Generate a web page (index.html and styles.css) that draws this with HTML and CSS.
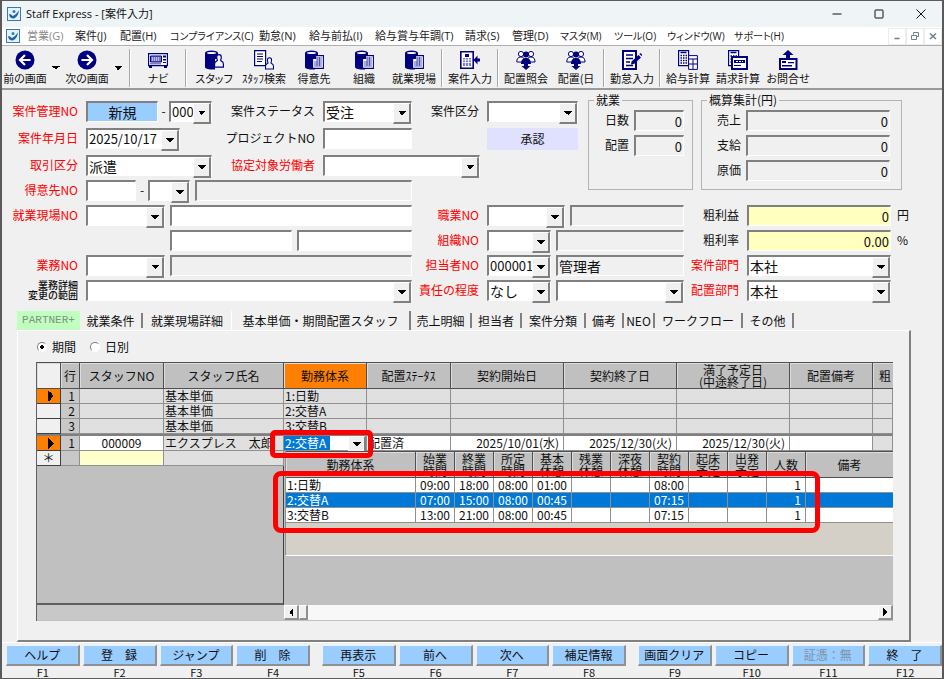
FILE: index.html
```html
<!DOCTYPE html>
<html lang="ja">
<head>
<meta charset="utf-8">
<title>Staff Express - [案件入力]</title>
<link rel="stylesheet" href="styles.css">
</head>
<body>
<svg class="defs" aria-hidden="true">
  <symbol id="logo" viewBox="0 0 14 14"><rect x=".5" y=".5" width="13" height="13" fill="#e4f3fa" stroke="#3c78b4"/><path d="M2 7.500c1.500-.5 2.500 0 3.500 1.500C8 8.500 10 6 12 3.500 11.500 7.500 9.500 11 6.500 11.500 4 11.500 2.500 10 2 7.500z" fill="#1f62ad"/><circle cx="7" cy="4.500" r="1.500" fill="#2b7fc0"/></symbol>
  <symbol id="cyl" viewBox="0 0 20 20"><path d="M1 3v14c0 1.500 3 2.500 6.500 2.500H11V9h3V3z"/><ellipse cx="7.500" cy="3" rx="6.500" ry="2.500"/><ellipse cx="7.500" cy="3" rx="4.500" ry="1.100" fill="#fff"/></symbol>
  <symbol id="man" viewBox="0 0 10 14"><path d="M5 .7c1.500 0 2.300 1 2.300 2.500S6.600 6 6.600 6.500l2.300 1.700c.6 1 .6 3 .6 5H.5c0-2 0-4 .6-5l2.300-1.700C3.400 6 2.700 4.700 2.700 3.200S3.500.7 5 .7z" fill="#f4f4ff" stroke="#000080" stroke-width="1.200"/></symbol>
  <symbol id="bldg" viewBox="0 0 12 14"><path d="M.6 13.400V3.500h3V.6h7.800v12.800z" fill="#fff" stroke="#000080" stroke-width="1.100"/><path d="M5 3h5M5 5h5M2 7h8M2 9h8M2 11h8M5 2v9M7.500 2v9" stroke="#4848a8" stroke-width=".9" fill="none"/></symbol>
  <symbol id="dbman" viewBox="0 0 20 20"><use href="#cyl" width="20" height="20"/><use href="#man" x="10" y="4" width="10" height="14"/></symbol>
  <symbol id="dbbldg" viewBox="0 0 20 20"><use href="#cyl" width="20" height="20"/><use href="#bldg" x="8" y="5" width="12" height="14"/></symbol>
  <symbol id="people" viewBox="0 0 20 20"><circle cx="5" cy="4" r="2.600" fill="#fff" stroke="#000080"/><circle cx="15" cy="4" r="2.600" fill="#fff" stroke="#000080"/><path d="M.8 12c0-3 1-5 4-5s4 2 4 5zM11 12c0-3 1-5 4-5s4 2 4 5z" fill="#fff" stroke="#000080"/><circle cx="10" cy="4.500" r="3"/><path d="M5 14c0-4 2-6 5-6s5 2 5 6zM8 14h4v2h2.500L10 20l-4.500-4H8z"/></symbol>
  <symbol id="back" viewBox="0 0 20 20"><circle cx="10" cy="10" r="9.500"/><path d="M15.500 10H5.500M10 5l-5 5 5 5" stroke="#fff" stroke-width="2.200" fill="none"/></symbol>
  <symbol id="next" viewBox="0 0 20 20"><circle cx="10" cy="10" r="9.500"/><path d="M4.500 10h10M10 5l5 5-5 5" stroke="#fff" stroke-width="2.200" fill="none"/></symbol>
  <symbol id="navi" viewBox="0 0 20 20"><path d="M.6 3.600h18.800v12H.600z" fill="#fff" stroke="#000080" stroke-width="1.200"/><path d="M2.500 6h11v6h-11z" fill="#7474c0" stroke="#000080"/><path d="M4 8h8M4 10h8" stroke="#fff" stroke-dasharray="1 1"/><path d="M15 5.500h3v2h-3zM15 9h3v1.500h-3zM15 12h3v1h-3zM2 13.500h11v.8H2zM1 16h3v2H1zM16 16h3v2h-3z"/></symbol>
  <symbol id="search" viewBox="0 0 20 20"><path d="M.6.600h11v15H.600z" fill="#fff" stroke="#000080" stroke-width="1.200"/><path d="M3 4h6M3 6.500h6M3 9h6M3 11.500h5" stroke="#000080"/><use href="#man" x="11" y="7" width="9" height="13"/></symbol>
  <symbol id="entry" viewBox="0 0 20 20"><path d="M.8 1.800h12.400v16.400H.800z" fill="#fff" stroke="#000080" stroke-width="1.600"/><path d="M3 8h8v8H3z" fill="#8080c4"/><path d="M3 10h8M3 12.500h8M5.500 8v8M8.500 8v8" stroke="#fff" stroke-width=".8"/><path d="M5 4h4v3H5zM13.500 10l4-4.500V8.500H20v3h-2.500v3z"/></symbol>
  <symbol id="write" viewBox="0 0 20 20"><path d="M1 1h13v18H1z" fill="#fff" stroke="#000080" stroke-width="2"/><path d="M4 5h7M4 8.500h7M4 12h4M4 15.500h7" stroke="#000080" stroke-width="1.400"/><path d="M9.500 11.500l7-6.500 2.500 2.500-7 6.500-3 .500zM17.500 4l1-1 2 2-1 1z"/></symbol>
  <symbol id="pay" viewBox="0 0 20 20"><path d="M.6.600h10v15H.600z" fill="#fff" stroke="#000080" stroke-width="1.200"/><path d="M2.500 2.500h6M2.500 5.500h1.500m1 0h1.500m1 0H9M2.500 8h1.500m1 0h1.500m1 0H9M2.500 10.500h1.500m1 0h1.500m1 0H9M2.500 13h1.500m1 0h1.500m1 0H9" stroke="#000080" stroke-width="1.500"/><path d="M10.600 5.600h8.800v13.800h-8.800zM10.600 9h8.800M15 9v10M10.600 14h8.800" fill="#fff" stroke="#000080"/></symbol>
  <symbol id="bill" viewBox="0 0 20 20"><path d="M.6.600h10v15H.600z" fill="#fff" stroke="#000080" stroke-width="1.200"/><path d="M2.500 2.500h6M2.500 6h1.500m1 0h1.500m1 0H9M2.500 9h1.500m1 0h1.500M2.500 12h1.500" stroke="#000080" stroke-width="1.500"/><path d="M4 7h15v12H4z" fill="#fff" stroke="#000080" stroke-width="2"/><path d="M6 10h11v3H6z"/><path d="M8 11.500h7" stroke="#fff" stroke-dasharray="2 1"/><path d="M6 15.500h7" stroke="#000080"/></symbol>
  <symbol id="mail" viewBox="0 0 20 20"><path d="M2 9h16.500v10H2z" fill="#fff" stroke="#000080" stroke-width="2"/><path d="M4 11h4v2H4zM4 15h10v1.500H4zM10 12h6v1.200h-6zM10 0l5.500 5H12v3H8V5H4.500z"/></symbol>
</svg>

<div class="window">
  <header class="titlebar">
    <svg class="logo"><use href="#logo"/></svg>
    <h1>Staff Express - [案件入力]</h1>
    <button class="sys" aria-label="最小化"><svg viewBox="0 0 10 10"><path d="M.5 5h9"/></svg></button>
    <button class="sys" aria-label="最大化"><svg viewBox="0 0 10 10"><rect x="1" y="1" width="8" height="8" rx=".5"/></svg></button>
    <button class="sys" aria-label="閉じる"><svg viewBox="0 0 10 10"><path d="M.5.500l9 9M9.500.500l-9 9"/></svg></button>
  </header>

  <nav class="menubar">
    <svg class="logo"><use href="#logo"/></svg>
    <div class="menus">
      <a href="#" class="off">営業(G)</a><a href="#">案件(J)</a><a href="#">配置(H)</a><a href="#" class="kana">コンプライアンス(C)</a><a href="#">勤怠(N)</a><a href="#">給与前払(I)</a><a href="#">給与賞与年調(T)</a><a href="#">請求(S)</a><a href="#">管理(D)</a><a href="#" class="kana">マスタ(M)</a><a href="#" class="kana">ツール(O)</a><a href="#" class="kana">ウィンドウ(W)</a><a href="#" class="kana">サポート(H)</a>
    </div>
    <button class="mdi" aria-label="子画面を最小化"><svg viewBox="0 0 8 8"><path d="M1.500 6.500h5"/></svg></button>
    <button class="mdi" aria-label="子画面を元に戻す"><svg viewBox="0 0 8 8"><path d="M2.500 2.500v-2h5v4h-2M.500 3.500h5v4h-5z" stroke-width="1"/></svg></button>
    <button class="mdi" aria-label="子画面を閉じる"><svg viewBox="0 0 8 8"><path d="M1 1.500l6 5.500M7 1.500L1 7"/></svg></button>
  </nav>

  <div class="toolbar">
    <button class="tool nav"><svg><use href="#back"/></svg>前の画面</button><button class="more" aria-label="前の画面の履歴"></button>
    <button class="tool nav"><svg><use href="#next"/></svg>次の画面</button><button class="more" aria-label="次の画面の履歴"></button>
    <i class="sep"></i>
    <button class="tool"><svg><use href="#navi"/></svg>ナビ</button>
    <i class="sep"></i>
    <button class="tool"><svg><use href="#dbman"/></svg>スタッフ</button>
    <button class="tool"><svg><use href="#search"/></svg>ｽﾀｯﾌ検索</button>
    <button class="tool"><svg><use href="#dbbldg"/></svg>得意先</button>
    <button class="tool"><svg><use href="#dbbldg"/></svg>組織</button>
    <button class="tool"><svg><use href="#dbbldg"/></svg>就業現場</button>
    <i class="sep"></i>
    <button class="tool"><svg><use href="#entry"/></svg>案件入力</button>
    <i class="sep"></i>
    <button class="tool"><svg><use href="#people"/></svg>配置照会</button>
    <button class="tool"><svg><use href="#people"/></svg>配置(日</button>
    <i class="sep"></i>
    <button class="tool"><svg><use href="#write"/></svg>勤怠入力</button>
    <i class="sep"></i>
    <button class="tool"><svg><use href="#pay"/></svg>給与計算</button>
    <button class="tool"><svg><use href="#bill"/></svg>請求計算</button>
    <button class="tool"><svg><use href="#mail"/></svg>お問合せ</button>
  </div>

  <main>
    <div class="top">
      <div class="fields">
        <div class="row r1">
          <label class="req" for="no">案件管理NO</label>
          <div class="pair"><input id="no" class="new" value="新規"><span>-</span><span class="combo"><select class="num" aria-label="枝番"><option>000</option></select></span></div>
          <label for="status">案件ステータス</label><span class="combo"><select id="status"><option>受注</option></select></span>
          <label for="kubun">案件区分</label><span class="combo"><select id="kubun"><option></option></select></span>
        </div>
        <div class="row r1">
          <label class="req" for="date">案件年月日</label>
          <span class="combo date"><select id="date" class="num"><option>2025/10/17</option></select></span>
          <label for="proj">プロジェクトNO</label><input id="proj">
          <button class="approve">承認</button>
        </div>
        <div class="row r3">
          <label class="req" for="deal">取引区分</label><span class="combo"><select id="deal"><option>派遣</option></select></span>
          <label class="req" for="kyotei">協定対象労働者</label><span class="combo"><select id="kyotei"><option></option></select></span>
        </div>
        <div class="row r4">
          <label class="req" for="client">得意先NO</label>
          <div class="pair client"><input id="client"><span>-</span><span class="combo"><select aria-label="得意先枝番"><option></option></select></span></div>
          <input class="ro" readonly aria-label="得意先名">
        </div>
      </div>
      <fieldset class="work"><legend>就業</legend>
        <label for="days">日数</label><input id="days" class="ro num r" readonly value="0">
        <label for="place">配置</label><input id="place" class="ro num r" readonly value="0">
      </fieldset>
      <fieldset class="sum"><legend>概算集計(円)</legend>
        <label for="uri">売上</label><input id="uri" class="ro num r" readonly value="0">
        <label for="shi">支給</label><input id="shi" class="ro num r" readonly value="0">
        <label for="gen">原価</label><input id="gen" class="ro num r" readonly value="0">
      </fieldset>
    </div>

    <div class="bottom">
      <div class="row r5">
        <label class="req" for="site">就業現場NO</label><span class="combo"><select id="site"><option></option></select></span><input aria-label="就業現場名">
        <label class="req" for="job">職業NO</label><span class="combo"><select id="job"><option></option></select></span><input class="ro" readonly aria-label="職業名">
        <label for="profit">粗利益</label><input id="profit" class="sumval num r" value="0"><span class="unit">円</span>
      </div>
      <div class="row r6">
        <input class="second" aria-label="就業現場部署"><input aria-label="就業現場担当">
        <label class="req" for="org">組織NO</label><span class="combo"><select id="org"><option></option></select></span><input class="ro" readonly aria-label="組織名">
        <label for="rate">粗利率</label><input id="rate" class="sumval num r" value="0.00"><span class="unit">%</span>
      </div>
      <div class="row r7">
        <label class="req" for="gyo">業務NO</label><span class="combo"><select id="gyo"><option></option></select></span><input class="ro" readonly aria-label="業務名">
        <label class="req" for="tan">担当者NO</label><span class="combo"><select id="tan" class="num"><option>000001</option></select></span><input class="ro" readonly aria-label="担当者名" value="管理者">
        <label class="req" for="dept1">案件部門</label><span class="combo"><select id="dept1"><option>本社</option></select></span>
      </div>
      <div class="row r8">
        <label class="tiny" for="range">業務詳細<br>変更の範囲</label><span class="combo"><select id="range"><option></option></select></span>
        <label class="req" for="resp">責任の程度</label><span class="combo"><select id="resp"><option>なし</option></select></span><span class="combo"><select aria-label="責任の内容"><option></option></select></span>
        <label class="req" for="dept2">配置部門</label><span class="combo"><select id="dept2"><option>本社</option></select></span>
      </div>
    </div>

    <div class="tabs" role="tablist">
      <button role="tab" class="partner">PARTNER+</button><button role="tab">就業条件</button><button role="tab" class="plain">就業現場詳細</button><button role="tab" class="active" aria-selected="true">基本単価・期間配置スタッフ</button><button role="tab">売上明細</button><button role="tab">担当者</button><button role="tab">案件分類</button><button role="tab">備考</button><button role="tab">NEO</button><button role="tab">ワークフロー</button><button role="tab">その他</button>
    </div>

    <section class="panel">
      <div class="radios">
        <label><input type="radio" name="view" checked>期間</label>
        <label><input type="radio" name="view">日別</label>
      </div>
      <div class="sheet">
        <table class="grid">
          <colgroup><col class="c24"><col class="c19"><col class="c84"><col class="c120"><col class="c83"><col class="c84"><col class="c113"><col class="c113"><col class="c113"><col class="c83"><col></colgroup>
          <thead><tr><th class="corner"></th><th>行</th><th>スタッフNO</th><th>スタッフ氏名</th><th class="hot">勤務体系</th><th>配置ｽﾃｰﾀｽ</th><th>契約開始日</th><th>契約終了日</th><th>満了予定日<br>(中途終了日)</th><th>配置備考</th><th class="cut">粗</th></tr></thead>
          <tbody>
            <tr><td class="mark on"></td><td class="n">1</td><td></td><td>基本単価</td><td>1:日勤</td><td></td><td></td><td></td><td></td><td></td><td></td></tr>
            <tr><td class="mark"></td><td class="n">2</td><td></td><td>基本単価</td><td>2:交替A</td><td></td><td></td><td></td><td></td><td></td><td></td></tr>
            <tr><td class="mark"></td><td class="n">3</td><td></td><td>基本単価</td><td>3:交替B</td><td></td><td></td><td></td><td></td><td></td><td></td></tr>
          </tbody>
          <tbody class="entry">
            <tr><td class="mark on"></td><td class="n">1</td><td class="w c">000009</td><td>エクスプレス　太郎</td><td class="w pick"><span class="combo"><select aria-label="勤務体系"><option>2:交替A</option></select></span></td><td class="w">配置済</td><td class="w d">2025/10/01(水)</td><td class="w d">2025/12/30(火)</td><td class="w d">2025/12/30(火)</td><td class="w"></td><td></td></tr>
            <tr><td class="mark star">＊</td><td class="n"></td><td class="y"></td><td></td><td class="none" colspan="7"></td></tr>
          </tbody>
        </table>
        <div class="rest"><div class="frozen"></div></div>
        <div class="scroll"><div class="foot"></div><button class="left" aria-label="左へ"></button><span class="thumb"></span><span class="track"></span><button class="right" aria-label="右へ"></button></div>

        <div class="popup">
          <table>
            <colgroup><col class="c130"><col class="c39"><col class="c39"><col class="c39"><col class="c39"><col class="c39"><col class="c39"><col class="c39"><col class="c39"><col class="c39"><col class="c39"><col></colgroup>
            <thead><tr><th>勤務体系</th><th>始業<br>時間</th><th>終業<br>時間</th><th>所定<br>時間</th><th>基本<br>休憩</th><th>残業<br>休憩</th><th>深夜<br>休憩</th><th>契約<br>時間</th><th>起床<br>予定</th><th>出発<br>予定</th><th>人数</th><th>備考</th></tr></thead>
            <tbody>
              <tr><td class="name">1:日勤</td><td>09:00</td><td>18:00</td><td>08:00</td><td>01:00</td><td></td><td></td><td>08:00</td><td></td><td></td><td>1</td><td></td></tr>
              <tr class="sel"><td class="name">2:交替A</td><td>07:00</td><td>15:00</td><td>08:00</td><td>00:45</td><td></td><td></td><td>07:15</td><td></td><td></td><td>1</td><td></td></tr>
              <tr><td class="name">3:交替B</td><td>13:00</td><td>21:00</td><td>08:00</td><td>00:45</td><td></td><td></td><td>07:15</td><td></td><td></td><td>1</td><td></td></tr>
            </tbody>
          </table>
        </div>
        <div class="callout small"></div>
        <div class="callout large"></div>
      </div>
    </section>
  </main>

  <footer>
    <div class="keys"><div><button>ヘルプ</button>F1</div><div><button>登　録</button>F2</div><div><button>ジャンプ</button>F3</div><div><button>削　除</button>F4</div></div>
    <div class="keys"><div><button>再表示</button>F5</div><div><button>前へ</button>F6</div><div><button>次へ</button>F7</div><div><button>補足情報</button>F8</div></div>
    <div class="keys"><div><button>画面クリア</button>F9</div><div><button>コピー</button>F10</div><div><button disabled>証憑：無</button>F11</div><div><button>終　了</button>F12</div></div>
  </footer>
</div>
</body>
</html>
```
FILE: styles.css
```css
* { box-sizing: border-box; }
body {
  margin: 0;
  font: 12px/16px "Noto Sans CJK JP", sans-serif;
  color: #101010;
  background: #f0f0f0;
}
button, input, select { font: inherit; color: inherit; margin: 0; border-radius: 0; }
button { padding: 0; border: 0; background: none; }
.defs { display: none; }

.window {
  display: flex;
  flex-direction: column;
  min-height: 100vh;
  border: 2px solid #5a5a5a;
  border-width: 1px 2px;
  background: #f0f0f0;
}

/* Title and menu */
.titlebar { display: flex; align-items: center; height: 26px; padding-left: 5px; background: #eff4f6; }
.logo { width: 14px; height: 14px; flex: none; }
h1 { flex: 1; margin: 0 0 0 5px; font: 11px/16px "Open Sans", "Noto Sans CJK JP", sans-serif; }
.sys { width: 42px; height: 26px; }
.sys svg { width: 10px; height: 10px; display: block; margin: 0 auto; fill: none; stroke: #111; }
.menubar { display: flex; align-items: center; height: 18px; padding-left: 4px; background: #fff; }
.menus {
  flex: 1;
  display: grid;
  grid-template-columns: 48px 45px 50px 89px 50px 66px 90px 47px 48px 54px 53px 67px 1fr;
  margin-left: 7px;
  font: 11px/18px "Open Sans", "Noto Sans CJK JP", sans-serif;
  font-feature-settings: "palt";
}
.menus a { color: #222; text-decoration: none; white-space: nowrap; }
.menus .off { color: #8c8c8c; }
.menus .kana { font-size: 10px; }
.mdi { width: 18px; height: 17px; border: 1px solid #ececec; }
.mdi svg { display: block; width: 8px; height: 8px; margin: 0 auto; fill: none; stroke: #708090; stroke-width: 1.6; }

/* Toolbar */
.toolbar {
  display: flex;
  height: 45px;
  padding: 4px 0 0 1px;
  border-top: 1px solid #b0b0b0;
  border-bottom: 2px solid #9a9a9a;
}
.tool {
  display: flex;
  flex-direction: column;
  align-items: center;
  width: 50px;
  height: 36px;
  font-size: 11px;
  line-height: 15px;
  white-space: nowrap;
  font-feature-settings: "palt";
}
.tool.nav { width: 44px; }
.tool svg { width: 20px; height: 20px; margin-bottom: 1px; fill: #000080; flex: none; }
.more { width: 18px; height: 36px; background: conic-gradient(from -45deg at 50% 100%, #000 90deg, transparent 0) center / 8px 4px no-repeat; }
.sep { width: 2px; height: 38px; margin: -1px 2px 0; border-left: 1px solid #a8a8a8; border-right: 1px solid #fff; }

/* Form */
main { flex: 1; }
.top { display: flex; align-items: flex-start; margin-top: 4px; }
.fields { width: 586px; padding-top: 7px; }
.row { display: grid; column-gap: 5px; height: 25px; align-items: start; }
.row label { line-height: 20px; text-align: right; padding-right: 3px; white-space: nowrap; }
.req { color: #f00; }
.r1 { grid-template-columns: 79px 126px 101px 89px 65px 91px; height: 27px; }
.r3 { grid-template-columns: 79px 126px 101px 157px; }
.r4 { grid-template-columns: 79px 104px 217px; }
.r5 { grid-template-columns: 79px 79px 242px 65px 78px 114px 53px 144px 1fr; }
.r6 { grid-template-columns: 79px 79px 122px 115px 65px 64px 128px 53px 144px 1fr; }
.r7 { grid-template-columns: 79px 79px 242px 65px 64px 128px 53px 144px 1fr; }
.r8 { grid-template-columns: 79px 326px 65px 64px 128px 53px 144px 1fr; }
.second { grid-column: 3; }
.pair { display: grid; grid-template-columns: 72px 11px 43px; }
.pair > span:not(.combo) { text-align: center; line-height: 20px; }
.client { grid-template-columns: 50px 12px 42px; }
input:not([type]), .combo {
  width: 100%;
  min-width: 0;
  height: 21px;
  border: 1px solid;
  border-width: 2px 1px 1px 2px;
  border-color: #808080 #fff #fff #808080;
  background: #fff;
}
input:not([type]) { padding: 0 1px; font-size: 14px; line-height: 18px; }
.combo { display: grid; grid-template: 100% / 100%; }
.combo select {
  grid-area: 1 / 1;
  appearance: none;
  width: 100%;
  height: 18px;
  padding: 0 1px;
  border: 0;
  background: transparent;
  font-size: 14px;
  line-height: 18px;
}
.combo::after {
  content: "";
  grid-area: 1 / 1;
  justify-self: end;
  width: 15px;
  height: 18px;
  pointer-events: none;
  border: 1px solid;
  border-width: 1px 2px 2px 1px;
  border-color: #fff #808080 #808080 #fff;
  background: conic-gradient(from -45deg at 50% 100%, #000 90deg, transparent 0) center / 8px 4px no-repeat #f0f0f0;
}
.combo.date { width: 94px; }
.combo select.num, input.num:not([type]) { font-size: 13px; }
input.r { text-align: right; }
input.ro:not([type]) { background: #f0f0f0; }
input.new:not([type]) { background: #99ccff; text-align: center; }
input.sumval:not([type]) { background: #ffffc0; }
.approve { grid-column: 6; height: 22px; background: #e0e0ff; }
.tiny { font-size: 10px; font-weight: 500; }
.row .tiny { line-height: 10px; }
.unit { padding-left: 1px; line-height: 20px; }
fieldset {
  display: grid;
  gap: 4px 5px;
  align-content: start;
  min-width: 0;
  height: 96px;
  margin: 0;
  padding: 4px 7px 0;
  border: 1px solid #b4b4b4;
}
legend { height: 12px; margin-left: -2px; padding: 0 2px; line-height: 12px; }
fieldset label { line-height: 20px; text-align: right; }
.work { width: 105px; grid-template-columns: 33px 50px; }
.sum { width: 201px; margin-left: 8px; grid-template-columns: 32px 144px; }

/* Tabs */
.tabs {
  display: grid;
  grid-template-columns: 63px 63px 88px 180px 61px 50px 64px 38px 31px 88px 51px;
  height: 19px;
  margin: 6px 0 0 15px;
}
.tabs button { height: 15px; align-self: center; border-right: 2px solid #808080; line-height: 15px; white-space: nowrap; }
.tabs .partner { height: 19px; border: 0; background: #c0ffc0; color: #7d937d; font-family: "Liberation Mono", monospace; font-size: 11px; }
.tabs .plain { border: 0; }
.tabs .active { height: 19px; border-left: 1px solid #fff; }
.panel {
  height: 312px;
  margin: 0 31px 0 15px;
  padding: 8px 14px 0 18px;
  border: 1px solid;
  border-width: 1px 2px 2px 1px;
  border-color: #fff #808080 #808080 #fff;
}
.radios { display: flex; gap: 14px; height: 23px; padding-left: 1px; }
.radios label { display: flex; align-items: center; gap: 5px; height: 16px; }
.radios input {
  appearance: none;
  width: 10px;
  height: 10px;
  border: 1px solid;
  border-color: #808080 #fff #fff #808080;
  border-radius: 50%;
  background: #fff;
}
.radios input:checked { background: radial-gradient(#000 2px, #fff 2px); }

/* Staff sheet */
.sheet { position: relative; height: 259px; margin-right: 2px; border-left: 1px solid #606060; background: #c0c0c0; }
table { width: 100%; table-layout: fixed; border-collapse: separate; border-spacing: 0; }
.c19 { width: 19px; } .c24 { width: 24px; } .c39 { width: 39px; } .c83 { width: 83px; }
.c84 { width: 84px; } .c113 { width: 113px; } .c120 { width: 120px; } .c130 { width: 130px; }
th, td { padding: 0 1px; white-space: nowrap; }
th {
  height: 27px;
  border: solid #505050;
  border-width: 1px 1px 1px 0;
  background: #c0c0c0;
  box-shadow: inset 1px 1px #dcdcdc;
  font-weight: 400;
  line-height: 12px;
}
td { height: 15px; border: solid #909090; border-width: 0 1px 1px 0; line-height: 14px; background: #e0e0e0; }
th.corner { background: #f0f0f0; }
th.hot { background: #ff8000; }
th.cut { border-right: 0; text-align: left; padding-left: 6px; }
td.mark { background: #f0f0f0; border-color: #404040; text-align: center; }
td.on { background: conic-gradient(from 225deg at 100% 50%, #000 90deg, transparent 0) 11px center / 6px 12px no-repeat #ff8000; }
td.n { background: #c8c8c8; text-align: right; padding-right: 4px; }
td.w { background: #fff; }
td.y { background: #ffffcc; }
.c { text-align: center; }
.d { text-align: right; padding-right: 4px; }
.entry tr:first-child td { height: 17px; border-top: 2px solid #808080; }
.pick { padding: 0; }
.pick .combo { height: 14px; border: 0; background: linear-gradient(#0078d7, #0078d7) left / 46px 100% no-repeat #fff; }
.pick .combo select { height: 14px; color: #fff; font-size: 12px; line-height: 14px; }
.pick .combo::after { height: 14px; }
td.none { background: #c0c0c0; border: 0; }
.rest { height: 139px; }
.frozen { width: 247px; height: 100%; border-right: 1px solid #404040; border-bottom: 2px solid #606060; }
.scroll { display: flex; height: 15px; background: #f8f8f8; }
.foot { width: 247px; background: #c8c8c8; }
.scroll button, .thumb { width: 15px; border: 1px solid; border-width: 1px 2px 2px 1px; border-color: #fff #909090 #909090 #fff; background-color: #f0f0f0; }
.scroll .thumb { width: 9px; }
.track { flex: 1; }
.left, .right { background: conic-gradient(from 45deg at 0 50%, #000 90deg, transparent 0) center / 4px 8px no-repeat; }
.right { background-image: conic-gradient(from 225deg at 100% 50%, #000 90deg, transparent 0); }

.popup {
  position: absolute;
  top: 89px;
  left: 248px;
  right: 0;
  height: 105px;
  border-left: 1px solid #909090;
  border-bottom: 1px solid #fff;
  background: #d4d0c8;
}
.popup thead th:last-child { border-right: 0; }
.popup td { background: #fff; text-align: right; padding-right: 4px; }
.popup td:last-child { border-right: 0; }
.popup td.name { text-align: left; }
.popup .sel td { background: #0078d7; color: #fff; }
.callout { position: absolute; border: 5px solid #f00; pointer-events: none; }
.small { top: 68px; left: 233px; width: 103px; height: 28px; border-radius: 5px; }
.large { top: 109px; left: 236px; width: 547px; height: 62px; border-radius: 8px; }

/* Function keys */
footer { display: grid; grid-template-columns: repeat(3, 1fr); gap: 12px; padding: 2px 0 0 4px; border-top: 1px solid #fff; }
.keys { display: grid; grid-template-columns: repeat(4, 1fr); gap: 3px; text-align: center; font-size: 11px; line-height: 12px; }
.keys button {
  display: block;
  width: 100%;
  height: 21px;
  border: 1px solid;
  border-width: 1px 2px 2px 1px;
  border-color: #e8f4ff #909090 #909090 #e8f4ff;
  background: #99ccff;
  font-size: 12px;
}
.keys button:disabled { color: #7c93a8; }
```
